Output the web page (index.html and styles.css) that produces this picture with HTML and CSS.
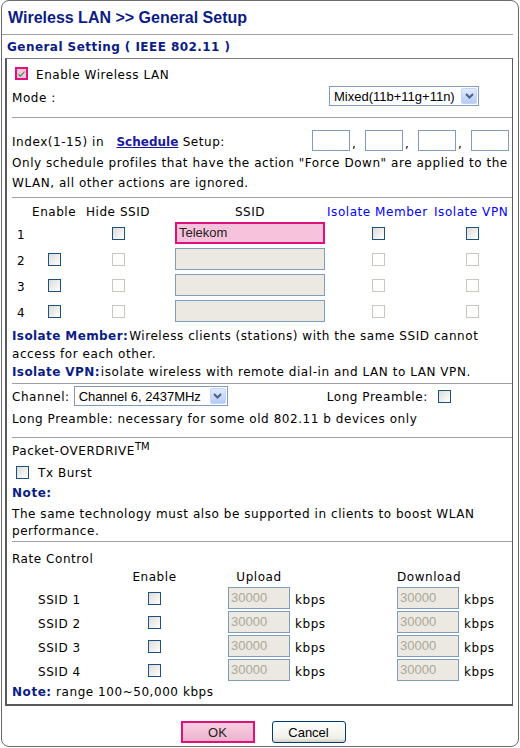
FILE: index.html
```html
<!DOCTYPE html>
<html>
<head>
<meta charset="utf-8">
<title>Wireless LAN General Setup</title>
<link rel="stylesheet" href="styles.css">
</head>
<body>
<div class="frame">
  <div class="title">Wireless LAN &gt;&gt; General Setup</div>
  <div class="subtitle">General Setting ( IEEE 802.11 )</div>
  <div class="box">
    <div class="sec sec-first">
      <div class="row row-enable">
        <span class="cbx cbx-pink"><svg width="13" height="13" viewBox="0 0 13 13"><rect x="1" y="1" width="11" height="11" fill="#f4c4da" stroke="#e2107c" stroke-width="2"/><path d="M3.5 6.2 L5.4 8.2 L9.5 3.9 L9.5 5.6 L5.4 9.9 L3.5 7.9 Z" fill="#2e9a3a"/></svg></span>
        <span class="t lbl">Enable Wireless LAN</span>
      </div>
      <div class="row row-mode">
        <span class="t">Mode :</span>
        <span class="select select-mode"><span class="select-text">Mixed(11b+11g+11n)</span><span class="select-btn"><svg width="9" height="6" viewBox="0 0 9 6"><path d="M1 1 L4.5 4.5 L8 1" fill="none" stroke="#4d6185" stroke-width="2"/></svg></span></span>
      </div>
    </div>
    <div class="sec sec-sched">
      <div class="row row-sched">
        <span class="t2">Index(1-15) in <a class="link">Schedule</a> Setup:</span>
        <span class="sched-inputs">
          <span class="inp inp-sched"></span><span class="comma">,</span>
          <span class="inp inp-sched"></span><span class="comma">,</span>
          <span class="inp inp-sched"></span><span class="comma">,</span>
          <span class="inp inp-sched"></span>
        </span>
      </div>
      <p class="para">Only schedule profiles that have the action "Force Down" are applied to the WLAN, all other actions are ignored.</p>
    </div>
    <div class="sec sec-ssid">
      <div class="ssid-grid">
        <div class="hd"></div>
        <div class="hd">Enable</div>
        <div class="hd hd-hide">Hide SSID</div>
        <div class="hd hd-ssid">SSID</div>
        <div class="hd hd-blue">Isolate Member</div>
        <div class="hd hd-blue hd-vpn">Isolate VPN</div>

        <div class="c-idx">1</div>
        <div></div>
        <div class="c-hide"><span class="cb"></span></div>
        <div class="c-ssid"><span class="inp inp-ssid inp-pink">Telekom</span></div>
        <div class="c-mem"><span class="cb"></span></div>
        <div class="c-vpn"><span class="cb"></span></div>

        <div class="c-idx">2</div>
        <div class="c-en"><span class="cb"></span></div>
        <div class="c-hide"><span class="cb cb-dis"></span></div>
        <div class="c-ssid"><span class="inp inp-ssid inp-dis"></span></div>
        <div class="c-mem"><span class="cb cb-dis"></span></div>
        <div class="c-vpn"><span class="cb cb-dis"></span></div>

        <div class="c-idx">3</div>
        <div class="c-en"><span class="cb"></span></div>
        <div class="c-hide"><span class="cb cb-dis"></span></div>
        <div class="c-ssid"><span class="inp inp-ssid inp-dis"></span></div>
        <div class="c-mem"><span class="cb cb-dis"></span></div>
        <div class="c-vpn"><span class="cb cb-dis"></span></div>

        <div class="c-idx">4</div>
        <div class="c-en"><span class="cb"></span></div>
        <div class="c-hide"><span class="cb cb-dis"></span></div>
        <div class="c-ssid"><span class="inp inp-ssid inp-dis"></span></div>
        <div class="c-mem"><span class="cb cb-dis"></span></div>
        <div class="c-vpn"><span class="cb cb-dis"></span></div>
      </div>
      <div class="notes">
        <div><b class="navy key">Isolate Member:</b>Wireless clients (stations) with the same SSID cannot</div>
        <div>access for each other.</div>
        <div><b class="navy key">Isolate VPN:</b>isolate wireless with remote dial-in and LAN to LAN VPN.</div>
      </div>
    </div>
    <div class="sec sec-chan">
      <div class="row row-chan">
        <span class="t2">Channel:</span>
        <span class="select select-chan"><span class="select-text">Channel 6, 2437MHz</span><span class="select-btn"><svg width="9" height="6" viewBox="0 0 9 6"><path d="M1 1 L4.5 4.5 L8 1" fill="none" stroke="#4d6185" stroke-width="2"/></svg></span></span>
        <span class="t2 lp">Long Preamble:</span>
        <span class="cb"></span>
      </div>
      <div class="line">Long Preamble: necessary for some old 802.11 b devices only</div>
    </div>
    <div class="sec sec-pkt">
      <div class="row-pkt">Packet-OVERDRIVE<sup class="tm">TM</sup></div>
      <div class="row row-tx"><span class="cb"></span><span class="t2 lbl-tx">Tx Burst</span></div>
      <div class="row-note"><b class="navy">Note:</b></div>
      <p class="para2">The same technology must also be supported in clients to boost WLAN performance.</p>
    </div>
    <div class="sec sec-rate">
      <div class="rate-title">Rate Control</div>
      <div class="rate-grid">
        <div></div>
        <div class="rh rh-en">Enable</div>
        <div class="rh rh-up">Upload</div>
        <div class="rh rh-down">Download</div>

        <div class="r-lbl">SSID 1</div>
        <div class="r-en"><span class="cb"></span></div>
        <div class="r-up"><span class="inp inp-rate inp-dis">30000</span><span class="kbps">kbps</span></div>
        <div class="r-down"><span class="inp inp-rate inp-dis">30000</span><span class="kbps">kbps</span></div>

        <div class="r-lbl">SSID 2</div>
        <div class="r-en"><span class="cb"></span></div>
        <div class="r-up"><span class="inp inp-rate inp-dis">30000</span><span class="kbps">kbps</span></div>
        <div class="r-down"><span class="inp inp-rate inp-dis">30000</span><span class="kbps">kbps</span></div>

        <div class="r-lbl">SSID 3</div>
        <div class="r-en"><span class="cb"></span></div>
        <div class="r-up"><span class="inp inp-rate inp-dis">30000</span><span class="kbps">kbps</span></div>
        <div class="r-down"><span class="inp inp-rate inp-dis">30000</span><span class="kbps">kbps</span></div>

        <div class="r-lbl">SSID 4</div>
        <div class="r-en"><span class="cb"></span></div>
        <div class="r-up"><span class="inp inp-rate inp-dis">30000</span><span class="kbps">kbps</span></div>
        <div class="r-down"><span class="inp inp-rate inp-dis">30000</span><span class="kbps">kbps</span></div>
      </div>
      <div class="rate-note"><b class="navy">Note:</b> range 100~50,000 kbps</div>
    </div>
  </div>
  <div class="buttons">
    <span class="btn btn-ok">OK</span>
    <span class="btn btn-cancel">Cancel</span>
  </div>
</div>
</body>
</html>
```

FILE: styles.css
```css
* { box-sizing: border-box; }
html, body { margin: 0; padding: 0; background: #fff; }
body {
  font-family: "DejaVu Sans", Verdana, sans-serif;
  font-size: 12px;
  letter-spacing: 0.55px;
  color: #000;
}
.frame {
  margin-left: 1px;
  width: 518px;
  height: 747px;
  border: 1px solid #6a6a6a;
  border-radius: 8px;
  overflow: hidden;
}
.title {
  font-family: "Liberation Sans", Arial, sans-serif;
  font-weight: bold;
  font-size: 16px;
  letter-spacing: 0;
  line-height: 20px;
  color: #0b1c86;
  padding: 7px 0 0 6px;
  height: 34px;
  margin-right: 5px;
  border-bottom: 1px solid #a0a0a0;
}
.subtitle {
  font-weight: bold;
  color: #0b1c86;
  line-height: 16px;
  padding-left: 5px;
  margin: 4px 0 3px 0;
  letter-spacing: 0.45px;
}
.box {
  margin: 0 5px 0 3px;
  border-top: 1px solid #7c7c7c;
  border-left: 2px solid #5a5a5a;
  border-right: 1px solid #5a5a5a;
  border-bottom: 2px solid #5a5a5a;
  height: 648px;
}
.sec {
  margin-left: 5px;
  border-top: 1px solid #a0a0a0;
}
.t { padding-top: 4px; }
.t2 { padding-top: 2px; }
.sec-first { border-top: none; padding: 3px 0 9px 0; }
.row { display: flex; align-items: center; }
.row-enable { height: 22px; }
.cbx { display: inline-block; width: 13px; height: 13px; margin-left: 3px; }
.cbx svg { display: block; }
.lbl { margin-left: 8px; }
.row-mode { height: 24px; justify-content: space-between; padding-right: 33px; }

.select {
  display: inline-flex;
  align-items: center;
  height: 20px;
  border: 1px solid #7f9db9;
  background: #fff;
  padding: 1px;
  letter-spacing: 0;
}
.select-text {
  flex: 1;
  font-family: "Liberation Sans", Arial, sans-serif;
  font-size: 13px;
  padding-left: 3px;
  white-space: nowrap;
}
.select-btn {
  width: 16px;
  height: 16px;
  display: flex;
  align-items: center;
  justify-content: center;
  background: linear-gradient(#e1eafe, #b6cbf7);
  border: 1px solid #c3d3fd;
  border-radius: 2px;
}
.select-btn svg { display: block; }
.select-mode { width: 150px; }
.select-chan { width: 154px; margin-left: 4px; }

.sec-sched { padding: 11px 0 4px 0; }
.row-sched { height: 23px; justify-content: space-between; padding-right: 3px; }
.link { color: #1a1aa0; font-weight: bold; text-decoration: underline; margin-left: 8px; letter-spacing: 0; }
.sched-inputs { display: flex; align-items: flex-end; }
.inp {
  display: inline-block;
  border: 1px solid #7f9db9;
  background: #fff;
  font-family: "Liberation Sans", Arial, sans-serif;
  font-size: 13px;
  letter-spacing: 0;
  white-space: nowrap;
}
.inp-sched { width: 38px; height: 21px; }
.comma { width: 15px; padding-left: 2px; line-height: 14px; }
.para { margin: 0; padding-top: 1px; line-height: 20px; }

.ssid-grid {
  display: grid;
  grid-template-columns: 20px 43px 86px 166px 101px 83px;
  grid-template-rows: 22px 26px 26px 26px 26px;
  align-items: center;
  justify-items: start;
}
.hd { white-space: nowrap; padding-top: 6px; }
.hd-hide { padding-left: 11px; }
.hd-ssid { margin-left: 14px; width: 150px; text-align: center; }
.hd-blue { color: #0000ff; }
.hd-vpn { padding-left: 6px; }
.c-idx { padding-left: 5px; padding-top: 4px; }
.c-en { padding-left: 16px; }
.c-hide { padding-left: 37px; }
.c-ssid { padding-left: 14px; }
.c-mem { padding-left: 45px; }
.c-vpn { padding-left: 38px; }
.c-en, .c-hide, .c-mem, .c-vpn, .c-ssid { display: flex; }

.cb {
  display: inline-block;
  flex: none;
  width: 13px;
  height: 13px;
  border: 1px solid #1c5180;
  background: linear-gradient(135deg, #dcdcd7 0%, #f4f4f2 70%, #fff 100%);
}
.cb-dis { border-color: #cac8bb; background: #fff; }

.inp-ssid { width: 150px; height: 22px; line-height: 20px; padding-left: 3px; }
.inp-pink { border: 2px solid #e2107c; background: #f7c2dc; color: #222; line-height: 18px; padding-left: 2px; }
.inp-dis { background: #ebe9e1; color: #aca899; }

.notes { padding: 3px 0 2px 0; line-height: 18px; white-space: nowrap; }
.navy { color: #0b1c86; }
.key { letter-spacing: 0.4px; margin-right: 1px; }

.sec-chan { padding: 0 0 9px 0; }
.row-chan { height: 24px; }
.lp { margin-left: 99px; margin-right: 10px; }
.line { line-height: 18px; padding-top: 2px; }

.sec-pkt { padding: 0 0 1px 0; }
.row-pkt { line-height: 20px; padding-top: 3px; height: 23px; }
.tm { font-size: 10px; line-height: 0; vertical-align: 5px; letter-spacing: 0; }
.row-tx { height: 22px; }
.row-tx .cb { margin-left: 4px; }
.lbl-tx { margin-left: 9px; }
.row-note { height: 20px; line-height: 20px; }
.para2 { margin: 0; padding-top: 3px; line-height: 17px; }

.sec-rate { padding: 9px 0 0 0; }
.rate-title { line-height: 17px; }
.rate-grid {
  display: grid;
  grid-template-columns: 122px 41px 222px 1fr;
  grid-template-rows: 18px 24px 24px 24px 24px;
  align-items: center;
}
.rh { white-space: nowrap; }
.rh-en { justify-self: center; }
.rh-up { margin-left: 53px; width: 62px; text-align: center; }
.rh-down { width: 62px; text-align: center; }
.r-lbl { padding-left: 26px; padding-top: 4px; }
.r-en { display: flex; justify-content: center; }
.r-up { display: flex; align-items: center; padding-left: 53px; }
.r-down { display: flex; align-items: center; }
.r-up .kbps, .r-down .kbps { padding-top: 4px; }
.inp-rate { width: 62px; height: 22px; line-height: 20px; padding-left: 2px; }
.kbps { margin-left: 5px; }
.rate-note { line-height: 18px; padding-top: 1px; }

.buttons {
  display: flex;
  justify-content: center;
  gap: 17px;
  margin-top: 15px;
  padding-left: 6px;
}
.btn {
  display: flex;
  align-items: center;
  justify-content: center;
  width: 74px;
  height: 22px;
  font-family: "Liberation Sans", Arial, sans-serif;
  font-size: 13px;
  letter-spacing: 0;
}
.btn-ok {
  border: 2px solid #e2107c;
  background: linear-gradient(#f6cfe1, #eeb2cd);
  color: #222;
}
.btn-cancel {
  border: 1px solid #003c74;
  border-radius: 3px;
  background: linear-gradient(#ffffff, #f0f0ea 80%, #d6d0c5);
}
```
